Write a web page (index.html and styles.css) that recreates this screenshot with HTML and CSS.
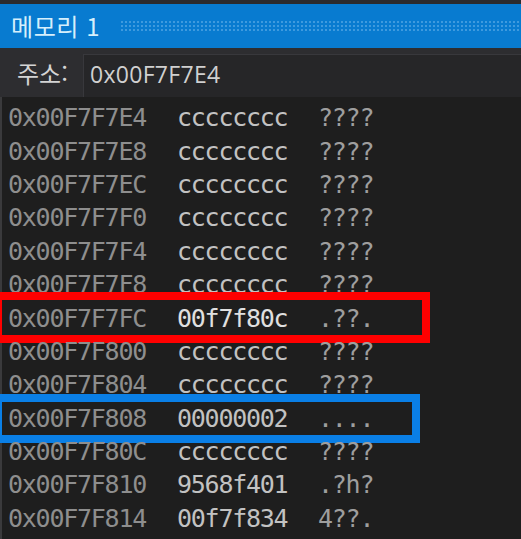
FILE: index.html
```html
<!DOCTYPE html>
<html lang="ko">
<head>
<meta charset="utf-8">
<link rel="stylesheet" href="styles.css">
</head>
<body>
<div class="window">
  <div class="topstrip"></div>
  <div class="titlebar">
    <span class="title">메모리 1</span>
    <span class="grip"></span>
  </div>
  <div class="addrbar">
    <span class="label">주소:</span>
    <div class="input">0x00F7F7E4</div>
  </div>
  <div class="mem">
    <div class="row"><span class="a">0x00F7F7E4</span><span class="d">cccccccc</span><span class="t">????</span></div>
    <div class="row"><span class="a">0x00F7F7E8</span><span class="d">cccccccc</span><span class="t">????</span></div>
    <div class="row"><span class="a">0x00F7F7EC</span><span class="d">cccccccc</span><span class="t">????</span></div>
    <div class="row"><span class="a">0x00F7F7F0</span><span class="d">cccccccc</span><span class="t">????</span></div>
    <div class="row"><span class="a">0x00F7F7F4</span><span class="d">cccccccc</span><span class="t">????</span></div>
    <div class="row"><span class="a">0x00F7F7F8</span><span class="d">cccccccc</span><span class="t">????</span></div>
    <div class="row mark-red"><span class="a">0x00F7F7FC</span><span class="d bright">00f7f80c</span><span class="t">.??.</span></div>
    <div class="row"><span class="a">0x00F7F800</span><span class="d">cccccccc</span><span class="t">????</span></div>
    <div class="row"><span class="a">0x00F7F804</span><span class="d">cccccccc</span><span class="t">????</span></div>
    <div class="row mark-blue"><span class="a">0x00F7F808</span><span class="d">00000002</span><span class="t">....</span></div>
    <div class="row"><span class="a">0x00F7F80C</span><span class="d">cccccccc</span><span class="t">????</span></div>
    <div class="row"><span class="a">0x00F7F810</span><span class="d">9568f401</span><span class="t">.?h?</span></div>
    <div class="row"><span class="a">0x00F7F814</span><span class="d">00f7f834</span><span class="t">4??.</span></div>
  </div>
</div>
</body>
</html>
```

FILE: styles.css
```css
html, body {
  margin: 0;
  padding: 0;
  background: #1e1e1e;
  overflow: hidden;
}

.window {
  width: 521px;
  height: 539px;
  display: flex;
  flex-direction: column;
  overflow: hidden;
}

.topstrip {
  height: 4px;
  background: #2b2b2e;
}

.titlebar {
  height: 44px;
  background: #087bd0;
  display: flex;
  align-items: center;
  gap: 20px;
  padding-left: 11px;
}

.title {
  font-family: "Noto Sans CJK KR", "Noto Sans", sans-serif;
  font-size: 24px;
  color: #d5effc;
  line-height: 1;
  letter-spacing: 0.6px;
}

.grip {
  flex: 1;
  height: 12px;
  background-image: radial-gradient(circle, rgba(150, 205, 245, 0.38) 0.9px, transparent 1.3px);
  background-size: 4px 4px;
}

.addrbar {
  height: 49px;
  background: #2d2d30;
  display: flex;
  align-items: stretch;
  padding-top: 6px;
  box-sizing: border-box;
}

.label {
  width: 83px;
  padding-left: 17px;
  box-sizing: border-box;
  font-family: "Noto Sans CJK KR", "Noto Sans", sans-serif;
  font-size: 24px;
  color: #d4d4d4;
  display: flex;
  align-items: center;
  padding-bottom: 6px;
}

.input {
  flex: 1;
  background: #262628;
  border-left: 1px solid #38383c;
  border-top: 1px solid #38383c;
  font-family: "Open Sans", "Noto Sans", sans-serif;
  font-size: 23px;
  letter-spacing: 0.3px;
  color: #d0d0d0;
  padding-left: 6px;
  display: flex;
  align-items: center;
  padding-bottom: 4px;
}

.mem {
  flex: 1;
  border-left: 2px solid #3a3a3c;
  padding-top: 4px;
  padding-left: 6px;
  font-family: "DejaVu Sans Mono", monospace;
  font-size: 25px;
  letter-spacing: -1.25px;
}

.row {
  height: 33.4px;
  display: grid;
  grid-template-columns: 169px 141px auto;
  align-items: center;
  position: relative;
}

.a { color: #8e8e8e; }
.d { color: #c2c2c2; }
.t { color: #9e9e9e; }
.bright { color: #e0e0e0; }

.mark-red::after,
.mark-blue::after {
  content: "";
  position: absolute;
  box-sizing: border-box;
  border-width: 8px;
  border-style: solid;
  pointer-events: none;
}

.mark-red::after {
  left: -14px;
  top: -9px;
  bottom: -8px;
  width: 436px;
  border-color: #ff0000;
}

.mark-blue::after {
  left: -14px;
  top: -8px;
  bottom: -8px;
  width: 426px;
  border-color: #0a7fe6;
}
```
